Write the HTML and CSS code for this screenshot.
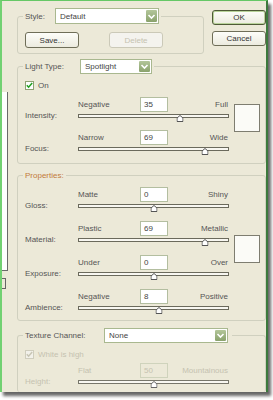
FILE: index.html
```html
<!DOCTYPE html>
<html lang="en">
<head>
    <meta charset="UTF-8">
    <title>Lighting Effects</title>
    <link rel="stylesheet" href="styles.css">
</head>
<body>
    <div class="screen">
        <div class="window">
            <div class="side">
                <div class="preview"></div>
                <div class="preview-tab"></div>
            </div>

            <div class="main">
                <div class="top-row">
                    <div class="group style-group">
                        <div class="group-head">
                            <span class="head-label style-label">Style:</span>
                            <div class="select style-select">
                                <span class="select-text">Default</span>
                                <span class="select-arrow"><svg width="9" height="9" viewBox="0 0 9 9"><path d="M1.5 3 L4.5 6 L7.5 3" fill="none" stroke="#fff" stroke-width="1.6"/></svg></span>
                            </div>
                        </div>
                        <div class="style-buttons">
                            <button class="btn btn-save">Save...</button>
                            <button class="btn btn-delete" disabled>Delete</button>
                        </div>
                    </div>
                    <div class="dialog-buttons">
                        <button class="btn btn-default">OK</button>
                        <button class="btn">Cancel</button>
                    </div>
                </div>

                <div class="group light-group">
                    <div class="group-head">
                        <span class="head-label light-label">Light Type:</span>
                        <div class="select light-select">
                            <span class="select-text">Spotlight</span>
                            <span class="select-arrow"><svg width="9" height="9" viewBox="0 0 9 9"><path d="M1.5 3 L4.5 6 L7.5 3" fill="none" stroke="#fff" stroke-width="1.6"/></svg></span>
                        </div>
                    </div>
                    <label class="check-row">
                        <span class="check"><svg width="7" height="7" viewBox="0 0 7 7"><path d="M0.8 3.2 L2.6 5.2 L6.2 1" fill="none" stroke="#21a121" stroke-width="1.5"/></svg></span>
                        <span>On</span>
                    </label>
                    <div class="group-body">
                        <div class="sliders">
                            <div class="slider-row">
                                <span class="row-label">Intensity:</span>
                                <div class="slider">
                                    <div class="slider-top">
                                        <span class="min">Negative</span>
                                        <span class="num">35</span>
                                        <span class="max">Full</span>
                                    </div>
                                    <div class="track">
                                        <span class="thumb" style="left: 67.5%"><svg width="7" height="7" viewBox="0 0 7 7"><path d="M0.5 3 L3.5 0.5 L6.5 3 L6.5 6.5 L0.5 6.5 Z" fill="#fff" stroke="#555"/></svg></span>
                                    </div>
                                </div>
                            </div>
                            <div class="slider-row">
                                <span class="row-label">Focus:</span>
                                <div class="slider">
                                    <div class="slider-top">
                                        <span class="min">Narrow</span>
                                        <span class="num">69</span>
                                        <span class="max">Wide</span>
                                    </div>
                                    <div class="track">
                                        <span class="thumb" style="left: 84.5%"><svg width="7" height="7" viewBox="0 0 7 7"><path d="M0.5 3 L3.5 0.5 L6.5 3 L6.5 6.5 L0.5 6.5 Z" fill="#fff" stroke="#555"/></svg></span>
                                    </div>
                                </div>
                            </div>
                        </div>
                        <div class="swatch light-swatch"></div>
                    </div>
                </div>

                <div class="group props-group">
                    <div class="group-head">
                        <span class="head-label props-label">Properties:</span>
                    </div>
                    <div class="group-body">
                        <div class="sliders">
                            <div class="slider-row">
                                <span class="row-label">Gloss:</span>
                                <div class="slider">
                                    <div class="slider-top">
                                        <span class="min">Matte</span>
                                        <span class="num">0</span>
                                        <span class="max">Shiny</span>
                                    </div>
                                    <div class="track">
                                        <span class="thumb" style="left: 50%"><svg width="7" height="7" viewBox="0 0 7 7"><path d="M0.5 3 L3.5 0.5 L6.5 3 L6.5 6.5 L0.5 6.5 Z" fill="#fff" stroke="#555"/></svg></span>
                                    </div>
                                </div>
                            </div>
                            <div class="slider-row">
                                <span class="row-label">Material:</span>
                                <div class="slider">
                                    <div class="slider-top">
                                        <span class="min">Plastic</span>
                                        <span class="num">69</span>
                                        <span class="max">Metallic</span>
                                    </div>
                                    <div class="track">
                                        <span class="thumb" style="left: 84.5%"><svg width="7" height="7" viewBox="0 0 7 7"><path d="M0.5 3 L3.5 0.5 L6.5 3 L6.5 6.5 L0.5 6.5 Z" fill="#fff" stroke="#555"/></svg></span>
                                    </div>
                                </div>
                            </div>
                            <div class="slider-row">
                                <span class="row-label">Exposure:</span>
                                <div class="slider">
                                    <div class="slider-top">
                                        <span class="min">Under</span>
                                        <span class="num">0</span>
                                        <span class="max">Over</span>
                                    </div>
                                    <div class="track">
                                        <span class="thumb" style="left: 50%"><svg width="7" height="7" viewBox="0 0 7 7"><path d="M0.5 3 L3.5 0.5 L6.5 3 L6.5 6.5 L0.5 6.5 Z" fill="#fff" stroke="#555"/></svg></span>
                                    </div>
                                </div>
                            </div>
                            <div class="slider-row">
                                <span class="row-label">Ambience:</span>
                                <div class="slider">
                                    <div class="slider-top">
                                        <span class="min">Negative</span>
                                        <span class="num">8</span>
                                        <span class="max">Positive</span>
                                    </div>
                                    <div class="track">
                                        <span class="thumb" style="left: 54%"><svg width="7" height="7" viewBox="0 0 7 7"><path d="M0.5 3 L3.5 0.5 L6.5 3 L6.5 6.5 L0.5 6.5 Z" fill="#fff" stroke="#555"/></svg></span>
                                    </div>
                                </div>
                            </div>
                        </div>
                        <div class="swatch props-swatch"></div>
                    </div>
                </div>

                <div class="group texture-group">
                    <div class="group-head texture-head">
                        <span class="head-label texture-label">Texture Channel:</span>
                        <div class="select texture-select">
                            <span class="select-text">None</span>
                            <span class="select-arrow"><svg width="9" height="9" viewBox="0 0 9 9"><path d="M1.5 3 L4.5 6 L7.5 3" fill="none" stroke="#fff" stroke-width="1.6"/></svg></span>
                        </div>
                    </div>
                    <label class="check-row disabled">
                        <span class="check"><svg width="7" height="7" viewBox="0 0 7 7"><path d="M0.8 3.2 L2.6 5.2 L6.2 1" fill="none" stroke="#c8c6b4" stroke-width="1.5"/></svg></span>
                        <span>White is high</span>
                    </label>
                    <div class="slider-row disabled">
                        <span class="row-label">Height:</span>
                        <div class="slider">
                            <div class="slider-top">
                                <span class="min">Flat</span>
                                <span class="num">50</span>
                                <span class="max">Mountainous</span>
                            </div>
                            <div class="track">
                                <span class="thumb" style="left: 50%"><svg width="7" height="7" viewBox="0 0 7 7"><path d="M0.5 3 L3.5 0.5 L6.5 3 L6.5 6.5 L0.5 6.5 Z" fill="#fff" stroke="#666"/></svg></span>
                            </div>
                        </div>
                    </div>
                </div>
            </div>
        </div>
    </div>
</body>
</html>
```

FILE: styles.css
```css
* {
    margin: 0;
    padding: 0;
    box-sizing: border-box;
}

body {
    font-family: "Liberation Sans", Arial, sans-serif;
    font-size: 8px;
    color: #555;
    background-color: #fff;
}

.screen {
    width: 273px;
    height: 400px;
    overflow: hidden;
}

.window {
    width: 268px;
    height: 392px;
    display: flex;
    background-color: #ece9d8;
    border-top: 1px solid #66c866;
    border-left: 2px solid #72d172;
    border-right: 2px solid #3d7a3d;
    box-shadow: 3px 4px 3px rgba(0,0,0,0.6);
}

/* edge of the preview pane behind */
.side {
    width: 6px;
    display: flex;
    flex-direction: column;
}

.preview {
    margin-top: 91px;
    height: 179px;
    background-color: #fff;
    border-right: 1px solid #6a6a6a;
    border-bottom: 1px solid #6a6a6a;
}

.preview-tab {
    margin-top: 7px;
    width: 4px;
    height: 11px;
    border: 1px solid #666;
    border-left: none;
}

.main {
    flex: 1;
    padding-left: 9px;
    display: flex;
    flex-direction: column;
}

/* group boxes */
.group {
    border: 1px solid #d0d0bf;
    border-radius: 3px;
    padding-left: 7px;
}

.group-head {
    display: flex;
    align-items: center;
    width: fit-content;
    margin-left: -2px;
    padding: 0 2px;
    background-color: #ece9d8;
}

.head-label {
    line-height: 11px;
}

.props-label {
    color: #c27a3a;
}

.top-row {
    display: flex;
    align-items: flex-start;
}

.style-group {
    width: 187px;
    margin-top: 15px;
    padding-bottom: 5px;
}

.style-group .group-head {
    margin-top: -9px;
    height: 16px;
}

.style-label { width: 30px; }
.light-label { width: 55px; }
.texture-label { width: 79px; }

.style-buttons {
    display: flex;
    gap: 30px;
    margin-top: 8px;
}

.dialog-buttons {
    margin-top: 9px;
    margin-left: 8px;
    display: flex;
    flex-direction: column;
    gap: 6px;
}

/* buttons */
.btn {
    font: inherit;
    width: 54px;
    height: 16px;
    color: #333;
    border: 1px solid #6f6e58;
    border-radius: 3px;
    background: linear-gradient(#fdfdf9, #ecebdf);
}

.dialog-buttons .btn {
    height: 15px;
}

.btn-default {
    border-color: #4e5a36;
    box-shadow: inset 0 0 0 1px #b9d39a;
}

.btn:disabled {
    color: #c5c2b0;
    border-color: #cbc9b8;
    background: #f4f3ee;
}

/* select boxes */
.select {
    display: flex;
    align-items: center;
    height: 15px;
    background-color: #fff;
    border: 1px solid #a9b88f;
}

.style-select {
    width: 104px;
    height: 16px;
}

.light-select { width: 72px; }
.texture-select { width: 124px; }

.select-text {
    flex: 1;
    padding-left: 4px;
    color: #444;
}

.select-arrow {
    width: 13px;
    height: 100%;
    display: flex;
    align-items: center;
    justify-content: center;
    background: linear-gradient(#b3c69a, #8aa26c);
    border: 1px solid #fff;
    border-radius: 2px;
}

.light-group {
    margin-top: 12px;
    padding-bottom: 7px;
}

.light-group .group-head,
.texture-head {
    margin-top: -8px;
    height: 15px;
}

.texture-head {
    padding-right: 4px;
}

/* checkboxes */
.check-row {
    display: flex;
    align-items: center;
    gap: 4px;
    height: 9px;
    margin-top: 7px;
    color: #555;
}

.check {
    width: 9px;
    height: 9px;
    display: flex;
    align-items: center;
    justify-content: center;
    background-color: #fff;
    border: 1px solid #8fa274;
}

.check-row.disabled {
    color: #c5c2b0;
}

.check-row.disabled .check {
    background-color: #f2f1ea;
    border-color: #cfcdbd;
}

.group-body {
    display: flex;
    align-items: flex-start;
}

.light-group .group-body {
    margin-top: 7px;
}

.sliders {
    display: flex;
    flex-direction: column;
    gap: 7px;
}

/* slider rows */
.slider-row {
    display: flex;
    height: 26px;
}

.row-label {
    width: 53px;
    margin-top: 14px;
    line-height: 10px;
}

.slider {
    width: 151px;
}

.slider-top {
    display: grid;
    grid-template-columns: 62px 28px 1fr;
    align-items: end;
    height: 15px;
}

.min,
.max {
    line-height: 10px;
    padding-bottom: 2px;
}

.max {
    text-align: right;
    padding-right: 1px;
}

.num {
    height: 15px;
    padding-left: 3px;
    line-height: 13px;
    color: #444;
    background-color: #fff;
    border: 1px solid #b3bea0;
}

.track {
    position: relative;
    margin-top: 2px;
    height: 4px;
    background-color: #f8f7f1;
    border: 1px solid #6b6a5c;
}

.thumb {
    position: absolute;
    top: 0;
    transform: translateX(-50%);
    width: 7px;
    height: 7px;
    display: flex;
}

.swatch {
    width: 26px;
    height: 28px;
    margin-left: 5px;
    background-color: #fbfbf7;
    border: 1px solid #7e7d70;
}

.light-swatch {
    margin-top: 7px;
}

.props-group {
    margin-top: 11px;
    padding-bottom: 5px;
}

.props-group .group-head {
    margin-top: -6px;
    height: 11px;
}

.props-group .group-body {
    margin-top: 6px;
}

.props-group .sliders {
    gap: 8px;
}

.props-swatch {
    margin-top: 48px;
}

.texture-group {
    flex: 1;
    margin-top: 14px;
    border-bottom: none;
}

.texture-group .slider-row {
    margin-top: 4px;
}

.slider-row.disabled {
    color: #c5c2b0;
}

.slider-row.disabled .num {
    color: #c5c2b0;
    background-color: #ece9d8;
    border-color: #cfd3bc;
}

.slider-row.disabled .track {
    border-color: #77766a;
}
```
